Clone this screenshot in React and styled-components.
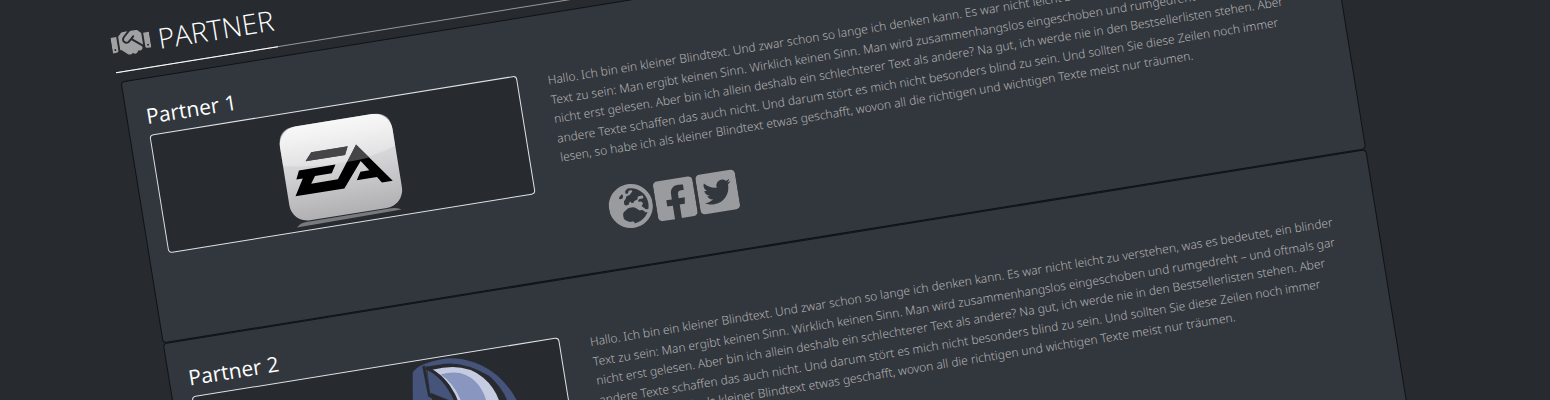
import React from "react";
import styled, { createGlobalStyle } from "styled-components";
import { FaHandshake, FaGlobeEurope, FaFacebookSquare, FaTwitterSquare } from "react-icons/fa";

const GlobalStyle = createGlobalStyle`
  body {
    margin: 0;
    background: #272b30;
    color: #b2b2b2;
    font-family: "Open Sans", "Noto Sans", sans-serif;
  }
`;

const Page = styled.main`
  box-sizing: border-box;
  height: 100vh;
  padding: 23px 0 0 108px;
  overflow: hidden;
`;

const Board = styled.div`
  width: calc(100vw - 328px);
  transform: rotate(-9.17deg);
  transform-origin: 0 0;
`;

const TitleBar = styled.header`
  display: flex;
  margin-bottom: 9px;
  border-bottom: 1px solid #96999c;
`;

const Title = styled.h1`
  display: flex;
  align-items: center;
  gap: 8px;
  height: 46px;
  margin: 0 0 -1px;
  padding-bottom: 4px;
  border-bottom: 1px solid #fff;
  color: #fff;
  font-size: 28px;
  font-weight: 300;
  line-height: 46px;

  svg {
    width: 39px;
    height: 32px;
    color: #a0a1a3;
  }
`;

const PartnerList = styled.div`
  padding-left: 3px;
`;

const Card = styled.section`
  box-sizing: border-box;
  display: flex;
  gap: 30px;
  min-height: 265px;
  padding: 19px;
  border: 1px solid #101316;
  border-radius: 4px;
  background: #32373e;
`;

const Profile = styled.div`
  flex: 0 0 372px;
`;

const Name = styled.h2`
  margin: 0;
  color: #fff;
  font-size: 21px;
  font-weight: 400;
  line-height: 37px;
`;

const LogoFrame = styled.div`
  box-sizing: border-box;
  height: 120px;
  border: 1px solid #dee2e6;
  border-radius: 4px;
  overflow: hidden;
  background: #272b30;

  svg {
    display: block;
    margin: 0 auto;
  }
`;

const Details = styled.div`
  flex: 1;
  padding-top: 37px;
`;

const Description = styled.p`
  margin: 0;
  font-family: "Noto Sans", sans-serif;
  font-size: 12px;
  font-weight: 300;
  line-height: 1.63;
  white-space: nowrap;
`;

const Links = styled.nav`
  display: flex;
  align-items: center;
  gap: 3px;
  margin: 26px 0 0 40px;
`;

const IconLink = styled.a`
  display: flex;
  color: #999b9e;

  svg {
    width: ${({ $wide }) => ($wide ? 44 : 40)}px;
    height: 46px;
  }
`;

function EaLogo() {
  return (
    <svg width="370" height="118" viewBox="0 1 370 118" role="img" aria-label="EA">
      <defs>
        <linearGradient id="tile" x1="0" y1="0" x2="0" y2="1">
          <stop offset="0" stopColor="#ececed" />
          <stop offset="0.5" stopColor="#d2d1d4" />
          <stop offset="1" stopColor="#b0afb2" />
        </linearGradient>
        <linearGradient id="gloss" x1="0" y1="0" x2="0" y2="1">
          <stop offset="0" stopColor="#fff" stopOpacity="1" />
          <stop offset="1" stopColor="#fff" stopOpacity="0.4" />
        </linearGradient>
      </defs>
      <rect x="126" y="15" width="114" height="95" rx="18" fill="url(#tile)" />
      <path d="M156 43h37l-4 8h-40z" fill="#000" />
      <path
        d="M141 59h37l-5 8h-17l-5 7h27l23.500-31.500 30.500 41.500h-11l-4-6h-20.500l5-8h9l-7-10.500L183 84h-49.500l10-16.500H137z"
        fill="#000"
      />
      <path d="M144 15h78q18 0 18 18v17q-50 16-114 2V33q0-18 18-18z" fill="url(#gloss)" opacity="0.6" />
      <path d="M156 43h37l-4 8h-40zM201.500 42.500l11 15q-10 1-22 .5z" fill="#454547" />
      <path d="M130 115q4-4 10-4h86q7 0 10 3z" fill="#77797c" />
    </svg>
  );
}

function HeadsetLogo() {
  return (
    <svg width="370" height="118" viewBox="1 1 370 118" role="img" aria-label="TeamSpeak">
      <path
        d="M212 60L218 38L222 12Q228 3 257 3Q285 6 305 28Q320 46 324 70V118H312V62Q311 44 297 27Q275 9 255 8L236 8L237 44L258 62V118H212z"
        fill="#46547c"
      />
      <path d="M234 7L235 37L258 54" fill="none" stroke="#272b30" strokeWidth="3" />
      <path d="M237 11Q252 22 259 48L236 34z" fill="#46547c" />
      <path d="M242 12Q275 9 291 28Q303 42 304 62V118H262V50Q258 24 242 12z" fill="#c5cce1" />
      <path d="M249 18Q272 15 283 31Q292 44 290 62V118H266V50Q261 28 249 18z" fill="#8996c0" />
      <path d="M236 9Q252 20 259 40Q263 54 263 72" fill="none" stroke="#272b30" strokeWidth="3" />
    </svg>
  );
}

const partners = [
  { name: "Partner 1", Logo: EaLogo },
  { name: "Partner 2", Logo: HeadsetLogo },
];

function PartnerCard({ name, Logo }) {
  return (
    <Card>
      <Profile>
        <Name>{name}</Name>
        <LogoFrame>
          <Logo />
        </LogoFrame>
      </Profile>
      <Details>
        <Description>
          Hallo. Ich bin ein kleiner Blindtext. Und zwar schon so lange ich denken kann. Es war nicht leicht zu verstehen, was es bedeutet, ein blinder
          <br />
          Text zu sein: Man ergibt keinen Sinn. Wirklich keinen Sinn. Man wird zusammenhangslos eingeschoben und rumgedreht – und oftmals gar
          <br />
          nicht erst gelesen. Aber bin ich allein deshalb ein schlechterer Text als andere? Na gut, ich werde nie in den Bestsellerlisten stehen. Aber
          <br />
          andere Texte schaffen das auch nicht. Und darum stört es mich nicht besonders blind zu sein. Und sollten Sie diese Zeilen noch immer
          <br />
          lesen, so habe ich als kleiner Blindtext etwas geschafft, wovon all die richtigen und wichtigen Texte meist nur träumen.
        </Description>
        <Links aria-label={name}>
          <IconLink $wide href="#website" aria-label="Website"><FaGlobeEurope /></IconLink>
          <IconLink href="#facebook" aria-label="Facebook"><FaFacebookSquare /></IconLink>
          <IconLink href="#twitter" aria-label="Twitter"><FaTwitterSquare /></IconLink>
        </Links>
      </Details>
    </Card>
  );
}

export default function App() {
  return (
    <>
      <GlobalStyle />
      <Page>
        <Board>
          <TitleBar>
            <Title><FaHandshake />PARTNER</Title>
          </TitleBar>
          <PartnerList>
            {partners.map((partner) => <PartnerCard key={partner.name} {...partner} />)}
          </PartnerList>
        </Board>
      </Page>
    </>
  );
}
